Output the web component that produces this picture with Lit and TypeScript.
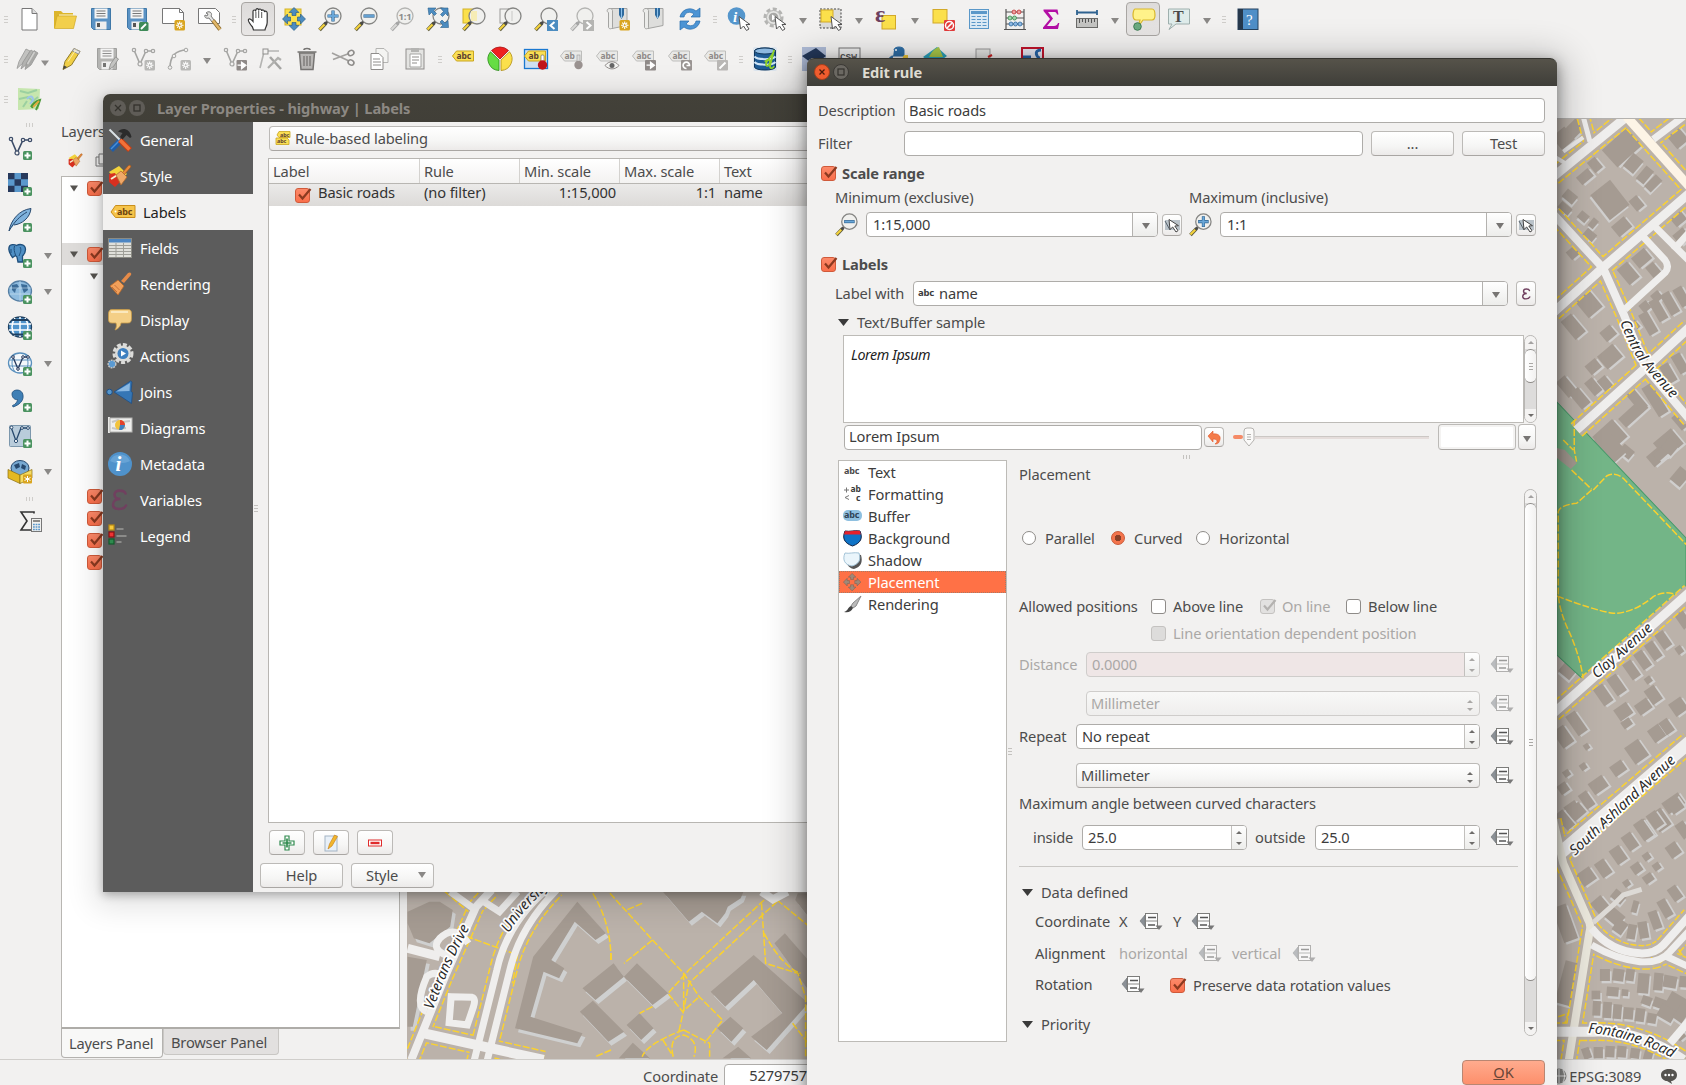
import { LitElement, html, css, svg, nothing } from "lit";
import { customElement } from "lit/decorators.js";
import { classMap } from "lit/directives/class-map.js";

/* ---------- icon parts ---------- */
const plus = svg`<rect x="15" y="15" width="9" height="9" rx="1.5" fill="#4b9360"/><path d="M19.500 16.500v6M16.500 19.500h6" stroke="#fff" stroke-width="2"/>`;
const gold = svg`<rect x="13.500" y="13" width="10.500" height="10.500" rx="1.500" fill="#d9a520"/><path d="M18.700 14.500v7.500M15 18.200h7.500M16.200 15.700l5 5M21.200 15.700l-5 5" stroke="#fff" stroke-width="1.100"/><circle cx="18.700" cy="18.200" r="1.500" fill="#d9a520" stroke="#fff"/>`;
const star = svg`<rect x="13.500" y="13" width="10.500" height="10.500" rx="1.500" fill="#b9b9b7"/><path d="M18.700 14.500v7.500M15 18.200h7.500M16.200 15.700l5 5M21.200 15.700l-5 5" stroke="#fff" stroke-width="1.100"/><circle cx="18.700" cy="18.200" r="1.500" fill="#b9b9b7" stroke="#fff"/>`;
const cursor = svg`<path d="M12 9.500l1.500 12.500 3-3 3 4.500 2.500-1.500-3-4.500h4z" fill="#fff" stroke="#555"/>`;
const mag = (inner: unknown, grey = false) => svg`
  <path d="M1.500 23L8 16" stroke="${grey ? "#a5a5a5" : "#5d5a3c"}" stroke-width="3.600"/>
  <path d="M1.500 22.500L6.500 17.500" stroke="${grey ? "#d8d8d6" : "#f5d33c"}" stroke-width="2.200"/>
  <path d="M7 17l3-3" stroke="${grey ? "#a5a5a5" : "#4a4a4a"}" stroke-width="2.600"/>
  <circle cx="15" cy="9" r="8" fill="#f0f0ee" stroke="${grey ? "#b4b4b2" : "#858583"}" stroke-width="1.300"/>${inner}`;
const tag = (fill: string, line: string, ink: string, t = "abc") => svug(fill, line, ink, t);
const svug = (fill: string, line: string, ink: string, t: string) => svg`
  <path d="M.5 9l4-5h17v10h-17z" fill="${fill}" stroke="${line}"/>
  <text x="4.500" y="12" font-size="8.500" font-weight="700" fill="${ink}" font-family="Noto Sans, sans-serif">${t}</text>`;
const gtag = (t = "abc") => tag("#e9e9e7", "#bdbdbb", "#8f8a88", t);
const floppy = (b: string, l: string) => svg`
  <path d="M2.500 1.500h19v21h-17l-2-2z" fill="${b}" stroke="${l}"/>
  <rect x="5.500" y="1.500" width="13" height="10" fill="#f4f4f4"/><path d="M7.500 4h9M7.500 6.500h9M7.500 9h9" stroke="#777"/>
  <rect x="6.500" y="14.500" width="11" height="8" fill="#eee"/><rect x="8" y="16" width="3" height="4" fill="#555"/>`;
const vee = (c: string) => svg`<path d="M3 3l6 14L15 4h7" fill="none" stroke="${c}" stroke-width="1.600"/>
  <g fill="#f2f1f0" stroke="${c}" stroke-width="1.200"><circle cx="3" cy="3" r="1.700"/><circle cx="9" cy="17" r="2"/><circle cx="15" cy="4" r="1.700"/><circle cx="22" cy="4" r="1.700"/></g>`;
const globe = (a: string, l: string) => svg`<ellipse cx="12" cy="11" rx="11.500" ry="10" fill="${a}" stroke="${l}" stroke-width="1.300"/>`;
const roll = (c: string) => svg`<path d="M4 1.500h17v17l-15 3z" fill="#dededc" stroke="#a4a4a2"/><path d="M4 1.500c-4 0-3 4-1.500 4V20c0 2 3 2.500 4 .5V3.500C6 2 5 1.500 4 1.500z" fill="#ececea" stroke="#a4a4a2"/><path d="M13 1h5v7l-2.500 4L13 8z" fill="#2e6a9e"/><path d="M15.500 1v10" stroke="${c}"/>`;
const arrow4 = (c: string, s: string) => svg`<g fill="${c}" stroke="${s}" stroke-width=".6"><path d="M12 .5l5 5h-3v3h-4v-3H7zM12 23.500l5-5h-3v-3h-4v3H7zM.5 12l5-5v3h3v4h-3v3zM23.500 12l-5-5v3h-3v4h3v3z"/></g>`;

const ICONS: Record<string, unknown> = {
  new: svg`<path d="M5 1.500h10l5 5v16.500H5z" fill="#fff" stroke="#777"/><path d="M15 1.500v5h5" fill="#ddd" stroke="#777"/>`,
  open: svg`<path d="M1 4h7l2 2h10v3h3l-3 12H1z" fill="#dcb52c"/><path d="M4 9h19.500l-3 12.500H1.500z" fill="#f2cf4c" stroke="#d0a824" stroke-width=".7"/><path d="M6 8h14" stroke="#fff6cf"/>`,
  save: floppy("#5a92c4", "#3f78a8"),
  saveas: svg`${floppy("#5a92c4", "#3f78a8")}<rect x="14" y="15" width="9.500" height="9" rx="1.500" fill="#3e8a57"/><path d="M16 22l5-5" stroke="#fff" stroke-width="1.800"/>`,
  composer: svg`<path d="M1.500 1.500h17l4 4v11h-21z" fill="#fff" stroke="#777"/><path d="M18.500 1.500v4h4" fill="none" stroke="#777"/>${gold}`,
  composers: svg`<path d="M1.500 1.500h17l4 4v11h-21z" fill="#fff" stroke="#777"/><path d="M9 6c3-3 7 0 5 3l3 4-2 2-3-4c-3 1-5-1-4-3l2 1 1-2z" fill="#e4e4e2" stroke="#777"/><path d="M16 13.500l7 9" stroke="#8a6a2c" stroke-width="4"/><path d="M16 13.500l7 9" stroke="#e3b869" stroke-width="2.400"/>`,
  hand: svg`<path d="M7.500 23l-1-3C4 17 1.500 14 2.500 12.500s3 0 4.500 2V4.500c0-2 2.500-2 2.700 0C9.500 1 12.300.8 12.700 3.500c0-2.200 2.800-2 3 .5.300-1.500 2.800-1.500 2.800 1 .8-1.500 2.700-.8 2.700 1.200v9c0 4-2 5-2.200 7.800z" fill="#fff" stroke="#333" stroke-width="1.200"/><path d="M9.900 5v6M12.700 4v7M15.700 5v6" stroke="#444" stroke-width=".9"/>`,
  pansel: svg`<rect x="3" y="2" width="16" height="16" fill="#fbe04b" stroke="#d2b229"/>${arrow4("#4c8cc0", "#1f547f")}`,
  zin: mag(svg`<path d="M15 3.500v11M9.500 9h11" stroke="#2f6390" stroke-width="3.200"/><path d="M15 4v10M10 9h10" stroke="#6aa7d8" stroke-width="2"/>`),
  zout: mag(svg`<path d="M9.500 9h11" stroke="#2f6390" stroke-width="3.200"/><path d="M10 9h10" stroke="#6aa7d8" stroke-width="1.800"/>`),
  z11: mag(svg`<text x="8.500" y="12.500" font-size="9.500" font-weight="700" fill="#8d8d8b" font-family="Noto Sans, sans-serif">1:1</text>`, true),
  zfull: svg`${mag(nothing)}<g fill="#4c8cc0" stroke="#2a618f" stroke-width=".6"><path d="M2 1h8L7.500 3.500l3 3-2 2-3-3L3 8zM22 1v8l-2.500-2.500-3 3-2-2 3-3L14.500 1zM22.500 20.500h-8L17 18l-3-3 2-2 3 3 3-2.500z"/></g>`,
  zsel: svg`<rect x="1" y="2" width="14" height="14" fill="#fbe04b" stroke="#d2b229"/>${mag(svg`<rect x="9" y="4" width="6" height="10" fill="#f6ecb5"/>`)}`,
  zlay: svg`<rect x="2" y="2" width="14" height="14" fill="#f2f2f0" stroke="#9a9a98"/>${mag(svg`<path d="M14 4v10" stroke="#c8c8c6"/>`)}`,
  zlast: svg`${mag(nothing)}<rect x="13" y="13" width="11" height="11" fill="#4c8cc0"/><path d="M20.500 15l-4 3.500 4 3.500" fill="none" stroke="#fff" stroke-width="2"/>`,
  znext: svg`${mag(nothing, true)}<rect x="13" y="13" width="11" height="11" fill="#b5b5b3"/><path d="M16.500 15l4 3.500-4 3.500" fill="none" stroke="#fff" stroke-width="2"/>`,
  bmnew: svg`${roll("#8cc0ea")}${gold}`,
  bm: roll("#8cc0ea"),
  refresh: svg`<path d="M2 10C3 3 12-1 18 4l4-3v9h-9l3-3C12 4 7 5 6 10z" fill="#4c94d4" stroke="#2a6fae" stroke-width=".7"/><path d="M22 14c-1 7-10 11-16 6l-4 3v-9h9l-3 3c4 3 9 2 10-3z" fill="#4c94d4" stroke="#2a6fae" stroke-width=".7"/>`,
  identify: svg`<circle cx="9.500" cy="9" r="8.800" fill="#5596cc"/><text x="6" y="14.500" font-size="15" font-style="italic" font-weight="700" fill="#fff" font-family="Liberation Serif, serif">i</text>${cursor}`,
  run: svg`<circle cx="10.500" cy="10.500" r="8.500" fill="none" stroke="#b4b4b2" stroke-width="3" stroke-dasharray="4 2.500"/><circle cx="10.500" cy="10.500" r="7" fill="#e6e6e4" stroke="#b4b4b2"/><circle cx="10.500" cy="10.500" r="4.800" fill="#a8a8a6"/><path d="M9 7.500l5 3-5 3z" fill="#fff"/>${cursor}`,
  select: svg`<rect x="1" y="2" width="21" height="19" fill="#dcdcda" stroke="#444" stroke-dasharray="2 1.500"/><rect x="2" y="3" width="12" height="12" fill="#fbe04b" stroke="#d2a929"/>${cursor}`,
  seleps: svg`<rect x="7" y="8.500" width="13.500" height="13.500" fill="#fbe04b" stroke="#d2a929"/><text x="0" y="15" font-size="24" font-weight="700" fill="#6d4160" font-family="Liberation Serif, serif">ε</text>`,
  desel: svg`<rect x="2" y="2.500" width="14" height="13.500" fill="#fbe04b" stroke="#d2a929"/><rect x="13" y="13" width="11" height="11" rx="1" fill="#e33b3b"/><circle cx="18.500" cy="18.500" r="4" fill="none" stroke="#fff" stroke-width="1.500"/><path d="M15.800 21.300l5.400-5.400" stroke="#fff" stroke-width="1.500"/>`,
  table: svg`<rect x="2.500" y="2.500" width="19" height="19" fill="#dbeaf5" stroke="#5a98c9"/><path d="M4 5.500h16" stroke="#5a98c9" stroke-width="3"/><path d="M4.500 9.500h15M4.500 12.500h15M4.500 15.500h15M4.500 18.500h15" stroke="#5a98c9" stroke-dasharray="4 1.500"/>`,
  abacus: svg`<path d="M3 2v20M21 2v20M1 22.500h22M3 5h18M3 11h18M3 17h18" fill="none" stroke="#555" stroke-width="1.200"/><g stroke-width=".8"><g fill="#f0a0a0" stroke="#b33"><circle cx="11" cy="5" r="2"/><circle cx="16" cy="5" r="2"/></g><g fill="#9fd6ab" stroke="#3a8a4e"><circle cx="7" cy="11" r="2"/><circle cx="11.500" cy="11" r="2"/></g><g fill="#8fbbe6" stroke="#2e6a9e"><circle cx="8" cy="17" r="2"/><circle cx="12.500" cy="17" r="2"/><circle cx="17" cy="17" r="2"/></g></g>`,
  sigma: svg`<path d="M4.500 2.500h14l1 5h-1.500c-.5-2-1.500-2.500-3-2.500H9l5 6.500-6 7.500h7c2 0 3-.8 4-3h1.300l-1.300 6H4v-1.500l7-8.500-6.500-8z" fill="#b30fa5"/>`,
  ruler: svg`<path d="M2 5.500h20M2 3v5M22 3v5" stroke="#2f6390" stroke-width="1.800"/><rect x="1.500" y="11.500" width="21" height="9" fill="#c4c4c2" stroke="#6b6b69"/><path d="M4.500 12v4M7.500 12v3M10.500 12v4M13.500 12v3M16.500 12v4M19.500 12v3" stroke="#555"/>`,
  tips: svg`<path d="M4 2h17c2 0 3 2 3 6s-1 5-3 5h-9l-5 7 2-7H5c-2 0-3-2-3-5s1-6 2-6z" fill="#fff28a" stroke="#d9b72b" stroke-width="1.200"/><circle cx="6.500" cy="19.500" r="3.800" fill="#6cab80" stroke="#3f7d54"/>`,
  textann: svg`<path d="M1.500 2h21v15H9l-7 5.500 3-5.500H1.500z" fill="#dfeceb" stroke="#9fb0ae"/><text x="6" y="15" font-size="16" font-weight="700" fill="#4a4a4a" font-family="Liberation Serif, serif">T</text>`,
  help: svg`<rect x="2" y="2" width="20" height="20.500" fill="#4f8fc8" stroke="#26435f"/><rect x="2" y="2" width="5" height="20.500" fill="#26384c"/><text x="10" y="17.500" font-size="15" fill="#fff" font-family="Liberation Serif, serif">?</text>`,
  pencils: svg`<g stroke="#979795" stroke-width=".8"><path d="M6 21.500l2-7L15 2l4 2-7 12z" fill="#c2c2c0"/><path d="M10 22l2-7 8-12 3 2-7 12z" fill="#b2b2b0"/><path d="M14 22.500l1.500-6.500L23 3.500l4 2.500-7 12z" fill="#a8a8a6"/><path d="M16.500 17l7-12" stroke="#cfcfcd" stroke-width="1.500"/></g><path d="M30 13.500h8l-4 5.500z" fill="#8f8d8b"/>`,
  pencil: svg`<path d="M4 22.500l2-8L15 1.500l6 3-8.500 13.500z" fill="#f1cf45" stroke="#8f7a2a"/><path d="M4 22.500l1-4 3 1.500z" fill="#444"/><path d="M15 1.500l6 3-1.500 2.500-6-3z" fill="#e4e4e2" stroke="#999"/><path d="M9 14.500l8-12" stroke="#fbeeb0"/>`,
  gsave: svg`<g opacity=".8">${floppy("#a5a5a3", "#8b8b89")}</g><path d="M14 22.500l1.500-5.500 5-7 3 2-5 7.500z" fill="#c4c4c2" stroke="#8b8b89" stroke-width=".8"/>`,
  gvee: svg`${vee("#a5a5a3")}${star}`,
  gcurve: svg`<path d="M3 21C3 10 8 3 20 3" fill="none" stroke="#a5a5a3" stroke-width="1.600"/><g fill="#f2f1f0" stroke="#a5a5a3"><circle cx="3" cy="20.500" r="1.800"/><circle cx="7" cy="9" r="1.800"/><circle cx="19" cy="3" r="1.800"/></g>${star}`,
  gmove: svg`${vee("#a5a5a3")}<rect x="13.500" y="13" width="10.500" height="10.500" rx="1" fill="#8f8a88"/><path d="M14.500 18.200h4v-3l4.500 3-4.500 3.500v-3" fill="#fff" stroke="#fff" stroke-width="1.200"/>`,
  gnode: svg`<path d="M8 4h12M5 5L1 21" stroke="#b4b4b2" stroke-width="1.600"/><rect x="4" y="2" width="5" height="5" fill="#f2f1f0" stroke="#8f8f8d"/><path d="M11 10l11 12" stroke="#a5a5a3" stroke-width="2.500"/><path d="M9 21L19 11l3 2" fill="none" stroke="#b0b0ae" stroke-width="2.200"/>`,
  trash: svg`<path d="M4.500 6h15l-1.500 16.500H6z" fill="#b9b7b5" stroke="#777573" stroke-width="1.500"/><path d="M2.500 5h19M9 3c0-2 6-2 6 0" fill="none" stroke="#777573" stroke-width="1.700"/><path d="M9 9v10M12 9v10M15 9v10" stroke="#777573" stroke-width="1.300"/>`,
  cut: svg`<path d="M1 6l17 8M2 12.500l16-6" stroke="#a3a19f" stroke-width="1.700"/><g fill="none" stroke="#8f8d8b" stroke-width="1.600"><ellipse cx="20" cy="6" rx="3" ry="2.500" transform="rotate(-30 20 6)"/><ellipse cx="20" cy="15.500" rx="3" ry="2.500" transform="rotate(30 20 15.500)"/></g>`,
  copy: svg`<path d="M9 1.500h8l4 4v10H9z" fill="#f4f4f2" stroke="#b4b4b2"/><path d="M4 6.500h8l4 4v12H4z" fill="#fff" stroke="#8f8d8b"/><path d="M6 12h7M6 15h8M6 18h8" stroke="#8f8d8b"/>`,
  paste: svg`<rect x="3" y="2" width="18" height="20" fill="#e4e4e2" stroke="#8f8d8b"/><rect x="8" y="1" width="8" height="4" fill="#b4b4b2"/><path d="M7 7h11v13H7z" fill="#fff" stroke="#a5a5a3"/><path d="M9 10h7M9 13h7M9 16h5" stroke="#8f8d8b"/>`,
  tagY: tag("#fadf55", "#c9a51e", "#5c4030"),
  pie: svg`<g stroke-width=".8"><path d="M12 12L3.500 3.500A12 12 0 0 1 20.500 3.500z" fill="#ee2020" stroke="#a11"/><path d="M11 13L2.500 4.800A11.500 11.500 0 0 0 11 23.500z" fill="#66dd44" stroke="#2c8a1a"/><path d="M13 13l8.500-8.200A11.500 11.500 0 0 1 13 23.500z" fill="#fbe04b" stroke="#b08d12"/></g>`,
  pinned: svg`<rect x=".5" y="2.500" width="23" height="19" fill="#cfe0f1" stroke="#1a78d0" stroke-width="1.300"/>${tag("#fadf55", "#c9a51e", "#5c4030", "ab")}<rect x="17" y="8" width="3" height="9" rx="1" fill="#fff" stroke="#555" stroke-width=".6"/><circle cx="18.500" cy="18" r="4.700" fill="#c0141c"/>`,
  gpin: svg`${gtag("ab")}<rect x="17" y="8" width="3" height="9" fill="#ddd" stroke="#999" stroke-width=".6"/><circle cx="18.500" cy="18" r="4.200" fill="#9a9290"/>`,
  geye: svg`${gtag()}<path d="M9 18.500c4-5 10-5 14 0-4 4.500-10 4.500-14 0z" fill="#f4f4f2" stroke="#8f8a88"/><circle cx="16" cy="18.500" r="2.500" fill="#666"/>`,
  gtmove: svg`${gtag()}<rect x="13" y="13" width="11" height="10.500" rx="1" fill="#8f8a88"/><path d="M14.500 18.200h4v-3l4 3-4 3v-3" fill="#fff" stroke="#fff" stroke-width="1.200"/>`,
  gtrot: svg`${gtag()}<rect x="13" y="13" width="11" height="10.500" rx="1" fill="#9a9593"/><path d="M18.500 21.500a3.200 3.200 0 1 1 3-3h-3" fill="none" stroke="#fff" stroke-width="1.700"/>`,
  gtedit: svg`${gtag()}<rect x="13" y="13" width="11" height="10.500" rx="1" fill="#b9b7b5"/><path d="M15.500 21.500l6-6" stroke="#fff" stroke-width="2"/>`,
  db: svg`<rect x="0" y="0" width="24" height="24" rx="2" fill="#cfe0ee" opacity=".6"/><path d="M1.500 4c0-4 21-4 21 0v16c0 4-21 4-21 0z" fill="#1f5c96" stroke="#12375c"/><ellipse cx="12" cy="4" rx="10.500" ry="3" fill="#8db9e0" stroke="#12375c"/><path d="M1.500 9.500c3 3.500 18 3.500 21 0M1.500 15c3 3.500 18 3.500 21 0" fill="none" stroke="#cfe4f6" stroke-width="2"/><path d="M12 15c2-3 5-3 5 0s-4 6-4 2 8-9 8-14l-4 16c0 3 3 3 4 0" fill="none" stroke="#8fd12c" stroke-width="1.800"/>`,
  cubeD: svg`<rect x="0" y="0" width="24" height="24" fill="#aebbd6"/><path d="M0 9L14 1l10 8-12 9z" fill="#24385a"/>`,
  csw: svg`<rect x="1" y="1" width="21" height="20" fill="#eee" stroke="#777"/><text x="2" y="13" font-size="9.500" font-weight="700" fill="#555" font-family="Liberation Mono, monospace">CSW</text>`,
  python: svg`<path d="M7 3c0-4 10-4 10 0v6H6c-4 0-5 5-4 8h3" fill="#2f6ea6" stroke="#2f6ea6"/><path d="M17 8h4v8H10v6" fill="#f2c93c"/><circle cx="9" cy="3" r="1" fill="#fff"/>`,
  cubeG: svg`<path d="M0 10L14 0l10 9-12 9z" fill="#2ba3bd"/><path d="M6 10C9 4 12 1 16 0l4 10z" fill="#a9c94a"/>`,
  sheet: svg`<rect x="4" y="2" width="14" height="16" fill="#e4e4e2" stroke="#999"/><path d="M16 10l4-2" stroke="#c22" stroke-width="2"/>`,
  redbox: svg`<rect x="1" y="1" width="21" height="21" fill="#e8e8f2" stroke="#c0142c" stroke-width="2"/><path d="M2 10h8M20 3c-8 0-4 8-1 8" fill="none" stroke="#2764a8" stroke-width="3"/>`,
  osm: svg`<path d="M1 1l22 1-1 20-21 1z" fill="#c6e6ae"/><path d="M3 4l8 2 9-3M2 12l9-2 5 4 5-4M6 20l4-6" fill="none" stroke="#9bd0a0" stroke-width="2"/><path d="M10 12c3-4 6-3 6 1l-3 4" fill="none" stroke="#9cc4ea" stroke-width="2"/><path d="M14 20c2-4 6-6 9-7-1 4-2 6-4 10M15 21l2-5" fill="none" stroke="#4c9a3a" stroke-width="2"/><path d="M16 20l6-6" stroke="#e1a93c" stroke-width="1.800"/>`,
  lvee: svg`${vee("#3c4c68")}${plus}`,
  lraster: svg`<rect x="0" y="1" width="20" height="19" fill="#5a98cc"/><path d="M0 1h6.500v6.300H0zM13 1h7v6.300h-7zM6.500 7.300H13v6.400H6.500zM0 13.700h6.500V20H0zM13 13.700h7V20h-7z" fill="#27395c"/>${plus}`,
  feather: svg`<path d="M1 23C3 12 11 2 23 .5 22 10 14 16 6 17" fill="#7fb2dc" stroke="#27496e"/><path d="M1 23C6 14 12 8 19 4" fill="none" stroke="#27496e"/>${plus}`,
  pg: svg`<path d="M1 4C1-.5 7 .5 8.500 1.500 12-.5 17.500.5 17.500 5.500c0 3-1.500 5-3 6.500v6h-4.500l-1-5-1.500-1.500-3 2C3 11 0 8 1 4z" fill="#4f8fc4" stroke="#1f4f7c" stroke-width="1.300"/><path d="M6.500 2c-1 3 0 6 1 9M12 3c2 3 0 6-1 9M3 5v4" fill="none" stroke="#1f4f7c"/>${plus}`,
  wms: svg`${globe("#8fbcdf", "#557fa4")}<path d="M4 5l5-1 2 3-3 2-1 4-3-3zM13 4l6 1 1 5-4 3-2-5z" fill="#3b6c98"/><path d="M1.500 8h21M1.500 14h21M12 1v20" stroke="#cfe2f2" stroke-width=".6"/>${plus}`,
  wcs: svg`${globe("#4f94cc", "#1f4060")}<path d="M1 8h22M1 14h22M12 1v20M7 2c-4 6-4 12 0 18M17 2c4 6 4 12 0 18" fill="none" stroke="#fff" stroke-width="1.500"/><path d="M4 4h16M4 18.500h16" stroke="#1f4060" stroke-width="2"/>${plus}`,
  wfs: svg`${globe("#f4f8fb", "#5a90bd")}<path d="M1 8h22M1 14h22M7 2c-4 6-4 12 0 18M17 2c4 6 4 12 0 18" fill="none" stroke="#5a90bd"/><path d="M5 5l5 12L15 5h5" fill="none" stroke="#27395c" stroke-width="1.300"/><g fill="#fff" stroke="#27395c"><circle cx="5" cy="5" r="1.300"/><circle cx="10" cy="17" r="1.300"/><circle cx="15" cy="5" r="1.300"/><circle cx="20" cy="5" r="1.300"/></g>${plus}`,
  comma: svg`<path d="M4 6c0-5 10-6 11 1 1 6-4 10-10 12l-.5-1.500c3-1 5-4 5-6C6 12 4 9 4 6z" fill="#3f7fb5" stroke="#1f4f7c" stroke-width=".8"/>${plus}`,
  vlay: svg`<rect x="1.500" y="1.500" width="21" height="21" rx="1" fill="#b9ccdb" stroke="#7c97ac"/><path d="M3 3l5 14 5-13h8" fill="none" stroke="#27496e" stroke-width="1.300"/><g fill="#fff" stroke="#27496e"><circle cx="3.500" cy="3.500" r="1.400"/><circle cx="8" cy="17" r="1.600"/><circle cx="14" cy="4" r="1.400"/><circle cx="20" cy="4" r="1.400"/></g>${plus}`,
  gpkg: svg`<ellipse cx="12" cy="8" rx="9" ry="7.500" fill="#78a9d2" stroke="#27496e"/><path d="M6 5l5-2 1 4-4 2zM14 4l4 2-1 4-4-2z" fill="#27496e"/><path d="M0 9.500l12 5.500v8.500L0 18z" fill="#e3b923" stroke="#8a6d10" stroke-width=".7"/><path d="M24 9.500L12 15v8.500L24 18z" fill="#f6dc62" stroke="#8a6d10" stroke-width=".7"/><rect x="15" y="14.500" width="9" height="9" rx="1" fill="#d9a520"/><path d="M19.500 16v6M16.500 17.500l6 3M22.500 17.500l-6 3" stroke="#fff"/>`,
  sumcalc: svg`<path d="M16 3.500V2H3l6 9-6 9h10" fill="none" stroke="#333" stroke-width="1.600"/><rect x="13.500" y="8.500" width="10" height="13" fill="#f0f0ee" stroke="#777"/><path d="M15 11h7" stroke="#8b8b89" stroke-width="2"/><path d="M15 14.500h7M15 17h7M15 19.500h7" stroke="#5a98cc" stroke-width="1.400" stroke-dasharray="1.800 .8"/>`,
  tools: svg`<path d="M3 22l10-10" stroke="#1f5da8" stroke-width="5.500"/><path d="M3 21l9-9" stroke="#4a8fd6" stroke-width="1.500"/><path d="M1.500 1.500l10 10" stroke="#dbe2e6" stroke-width="2"/><path d="M12 12l10 10" stroke="#c63d12" stroke-width="5.500"/><path d="M12 12l9.500 9.500" stroke="#f2723a" stroke-width="3.500"/><path d="M10 3.500c4-4.500 12-3 13.500 5.500l-1.500 1-3.500-3-4 4.500-2.500-2.500 2.500-4z" fill="#2b2b2b"/>`,
  style: svg`<path d="M1 8l10-6 8 8-9 8z" fill="#f3d33c"/><path d="M1 10l6-1 5 9-5 5-6-5z" fill="#d83020"/><path d="M3 15l8-5" stroke="#f7f0d0" stroke-width="2"/><path d="M14 9l6-7c2-2 4 0 2 2l-6 7z" fill="#e88a3c" stroke="#a55818" stroke-width=".7"/><path d="M8 11l5-4 6 6-6 8z" fill="#f0a868" stroke="#b06a2c" stroke-width=".8"/>`,
  taglab: svg`<path d="M0 12l4.500-6.500H24v12H4.500z" fill="#f6c44a" stroke="#c98e1c"/><circle cx="4.500" cy="11.500" r="1" fill="#fff"/><text x="6" y="14.800" font-size="9" font-weight="700" fill="#6c4312" font-family="Noto Sans, sans-serif">abc</text>`,
  fields: svg`<rect x=".5" y="2.500" width="23" height="19" fill="#e0e0da" stroke="#8b8b84"/><rect x="1" y="3" width="22" height="3.500" fill="#4d86c2"/><path d="M1 9.500h22M1 12.500h22M1 15.500h22M1 18.500h22M8 7v14M15.500 7v14" stroke="#9f9f98"/>`,
  brush: svg`<path d="M13 9l7-8c2-1.500 4 0 3 2l-7 8z" fill="#e58a48"/><path d="M2 14l8-6 6 6-6 9z" fill="#f2a05a" stroke="#b8682a" stroke-width=".8"/><path d="M4 15l5 5M6.500 13l5 5" stroke="#c9733a"/>`,
  bubble: svg`<path d="M4 1.500h16c2.500 0 3.500 1.500 3.500 4v5c0 3-1 4.500-3.500 4.500h-7c0 3-3 6-6 7 1-2 2-4 1-7H4c-2.500 0-3.500-1-3.500-4v-5c0-2.500 1-4.500 3.500-4.500z" fill="#f4cf86" stroke="#c89a48" stroke-width=".8"/><path d="M3 4h17" stroke="#fdf0cf" stroke-width="1.500"/>`,
  gears: svg`<circle cx="15" cy="9.500" r="9" fill="none" stroke="#dcdcda" stroke-width="3" stroke-dasharray="4 2"/><circle cx="15" cy="9.500" r="8" fill="#dcdcda"/><circle cx="15" cy="9.500" r="5.500" fill="#3f80c0"/><path d="M13 6.500l5 3-5 3z" fill="#fff"/><circle cx="4" cy="20" r="3.800" fill="#5a9ad2" stroke="#c4c4c2" stroke-width="1.500" stroke-dasharray="1.800 .9"/>`,
  joins: svg`<path d="M6 12L22.500 1l1.500 1-1 9.500 1.500 1-1 11z" fill="#3576b5" stroke="#1f4f85" stroke-width=".8"/><path d="M8 11.500L22 3l-.5 8z" fill="#8ab8e2"/><circle cx="1.500" cy="12" r="2.800" fill="#5596cc" stroke="#1f4f85"/>`,
  diagrams: svg`<rect x="0" y="1" width="2" height="16" fill="#e8e8e6"/><rect x="2" y="2" width="22" height="14" fill="#eeeeec" stroke="#b4b4b2"/><path d="M4 6l6-2 4 2 8-1M4 12l5 1 9-1" stroke="#c6c6c4" stroke-width="2" fill="none"/><circle cx="12" cy="9" r="5" fill="#f2c33c"/><path d="M12 9V4a5 5 0 0 1 5 5z" fill="#e2412c"/><path d="M12 9h5a5 5 0 0 1-6 5z" fill="#3f80c0"/>`,
  info: svg`<circle cx="12" cy="12" r="12" fill="#4f92cb"/><path d="M2 9a11 11 0 0 1 20 0c-6 3-14 3-20 0z" fill="#7fb4e0" opacity=".5"/><text x="7.500" y="19" font-size="21" font-style="italic" font-weight="700" fill="#fff" font-family="Liberation Serif, serif">i</text>`,
  eps: svg`<path d="M17.500 5.500C16.500 2 6.500 1 6.500 6.500c0 3.500 3 4.500 6 4.500-4 0-7.500 1.500-7.500 5.500 0 6 11 5.500 13 1" fill="none" stroke="#70405f" stroke-width="2.600" stroke-linecap="round"/>`,
  legend: svg`<g stroke-width="1.200"><rect x="1" y="1" width="5" height="5" fill="#f6c93c" stroke="#b98a12"/><rect x="1" y="8" width="5" height="5" fill="#e33" stroke="#8a1010"/><rect x="1" y="15" width="5" height="5" fill="#2f8a4e" stroke="#125a2a"/></g><path d="M8.500 5h7M8.500 12h10M8.500 18h5" stroke="#8b8b89" stroke-width="1.800"/>`,
  rules: svg`<path d="M4 1.500h11v6H4L2 5z" fill="#fadf55" stroke="#c9a51e" stroke-width=".8"/><path d="M1 8h11l2 2v4.500H1z" fill="#fadf55" stroke="#c9a51e" stroke-width=".8"/><g font-size="5.500" font-weight="700" fill="#5c4030" font-family="Noto Sans, sans-serif"><text x="5" y="6.500">abc</text><text x="2" y="13.300">abc</text></g>`,
  dd: svg`<path d="M0 8l5-6v12z" fill="#8b9096" stroke="#6f7377" stroke-width=".6"/><rect x="5.500" y=".5" width="12" height="15" fill="#fdfdfd" stroke="#7c7c7a"/><path d="M5.500 8h12" stroke="#8b8b89"/><path d="M8 4.500h8M8 12h7" stroke="#555" stroke-width="1.500"/><path d="M15.500 12.500h7l-3.500 4.500z" fill="#777"/>`,
  pick: svg`<rect x="1" y="3" width="15" height="10" fill="#b9c2c9"/><path d="M1 4l5 9" stroke="#55606a"/><path d="M5 2.500l1 10 2.700-2.500 3.300 5 2-1.300-3.200-4.700 3.700-.3z" fill="#fff" stroke="#444"/>`,
  undo: svg`<path d="M1 6l5-5v3c6-1 9 3 6 8-.5 1.500-2 2-4 2 3-2 3-5-2-5v3z" fill="#f47b4a" stroke="#e0582a" stroke-width=".6"/>`,
  lt: svg`<text x="1" y="10.500" font-size="9" font-weight="700" fill="#4a4a4a" font-family="Noto Sans, sans-serif">abc</text>`,
  lf: svg`<g font-weight="700" fill="#3a3a3a" font-size="8.500" font-family="Noto Sans, sans-serif"><text x="7.500" y="7">ab</text><text x="13" y="15.500">c</text></g><path d="M1 5h5M3.500 2.500v5M6 10.500l-4 2 4 2" fill="none" stroke="#777"/>`,
  lb: svg`<rect x="0" y="3" width="19" height="11" rx="5" fill="#8fc0e0"/><text x="1" y="11" font-size="9" font-weight="700" fill="#2f4456" font-family="Noto Sans, sans-serif">abc</text>`,
  lbg: svg`<path d="M2 2c5 1 9-1 15 0 3 7 1 12-7.500 15C1 14-1 9 2 2z" fill="#0f73c6" stroke="#124"/><path d="M2 2c5 1 9-1 15 0l.7 3.500H1z" fill="#e6202a"/>`,
  lsh: svg`<path d="M4 4c5 1 9-1 14 0 2 7 0 12-7 14-6-1-9-6-7-14z" fill="#555"/><path d="M2 2c4 1 9-1 14 0 2 7 0 11-7 13C2 14-1 9 2 2z" fill="#eaf5fb" stroke="#a4c4d8"/>`,
  lpl: svg`<g transform="scale(.76)">${arrow4("#a08878", "#6d5c52")}</g>`,
  lre: svg`<path d="M18 1L10 8l-2 3 2 2 3-2z" fill="#bbb" stroke="#888"/><path d="M8 11l2 2c-2 4-5 5-9 4 4-1 4-5 7-6z" fill="#444"/>`,
  add: svg`<path d="M6 1h4v5h5v4h-5v5H6v-5H1V6h5z" fill="#fff" stroke="#2f8a4e" stroke-width="1.200"/><path d="M8 3.500v9M3.500 8h9" stroke="#2f8a4e" stroke-width="1.700"/>`,
  edit: svg`<rect x="2" y="1" width="12" height="15" fill="#e8f0f8" stroke="#a4b4c4"/><path d="M5 14l1.500-5 5-9 3 1.500-5.500 9.500z" fill="#f2b62c" stroke="#c27a12" stroke-width=".6"/>`,
  rem: svg`<rect x="1.500" y="5" width="13" height="6" fill="#fff" stroke="#e02c2c"/><path d="M3.500 8h9" stroke="#e02c2c" stroke-width="2.400"/>`,
  srs: svg`<circle cx="8" cy="8" r="7.500" fill="#8b8b89"/><path d="M1 8h14M8 1v14M4 2c-2 4-2 8 0 12M12 2c2 4 2 8 0 12" stroke="#f2f1f0" fill="none"/>`,
  msg: svg`<path d="M8 1c5 0 8 2.500 8 6s-3 6-6 6l1 3-5-3C3 13 0 10.500 0 7s3-6 8-6z" fill="#55534f"/><g fill="#fff"><circle cx="4.500" cy="7" r="1.200"/><circle cx="8" cy="7" r="1.200"/><circle cx="11.500" cy="7" r="1.200"/></g>`,
  layers: svg`<path d="M4 4V1h10v3M4 4H1v9h10v-3M4 4v7h10" fill="none" stroke="#777"/>`,
};
const icon = (n: string, w = 24, h = w, vb = `0 0 ${w} ${h}`) =>
  html`<svg class="ic" width=${w} height=${h} viewBox=${vb}>${ICONS[n]}</svg>`;
const tri = (w = 8, h = 6, c = "#8a8886") =>
  html`<svg class="ic" width=${w} height=${h} viewBox="0 0 8 6"><path d="M0 0h8L4 6z" fill=${c} /></svg>`;
const check = (state = "on") => html`<span class="cb ${state}">${
  state === "on" || state === "dim"
    ? html`<svg width="17" height="16" viewBox="0 0 17 16"><path d="M4 7.500l3.500 4L15.500 2" fill="none" stroke=${state === "on" ? "#8c3a20" : "#b4b2b0"} stroke-width="2.200"/></svg>`
    : nothing
}</span>`;
const spin = html`<span class="spin"><i class="up"></i><i class="dn"></i></span>`;

const base = css`
  * { box-sizing: border-box; }
  :host { font: 14.67px/20px "Noto Sans", "Open Sans", sans-serif; color: #4c4c4c; white-space: nowrap; letter-spacing: -0.12px; }
  .ic { display: block; flex: none; overflow: visible; }
  .cb { display: inline-block; position: relative; width: 15px; height: 15px; border: 1px solid #8e8b88; border-radius: 3px; background: #fff; flex: none; }
  .cb.on { background: linear-gradient(#fc8a6a, #fa6f4b); border-color: #d05a3a; }
  .cb.dim { background: #e2e1e0; border-color: #c4c2c0; }
  .cb.gone { background: #dddcdb; border-color: #c4c2c0; }
  .cb svg { position: absolute; left: -1px; top: -2px; }
  .btn { display: flex; align-items: center; justify-content: center; height: 25px; border: 1px solid #bcbab7; border-bottom-color: #a9a6a3; border-radius: 4px; background: linear-gradient(#fff, #f6f6f5 60%, #eceae9); }
  .field { display: flex; align-items: center; height: 25px; border: 1px solid #aeaca9; border-radius: 4px; background: #fff; padding: 0 0 2px 4px; color: #3c3c3c; overflow: hidden; }
  .title { display: flex; align-items: center; height: 28px; border-radius: 7px 7px 0 0; font-weight: 700; }
  .wbtn { display: flex; align-items: center; justify-content: center; width: 16px; height: 16px; border-radius: 50%; }
  .hgrip { display: flex; gap: 2px; }
  .hgrip i { width: 1px; height: 4px; background: #c4c2bf; }
  .vgrip { display: flex; flex-direction: column; gap: 2px; }
  .vgrip i { width: 4px; height: 1px; background: #c4c2bf; }
`;

/* ---------- map canvas ---------- */
type B = [number, number, number, number, number];
/* each block: centre x, centre y, width, height, rotation, in the units of its tile */
const TILE_A: B[] = [
  [1000,240,60,40,-45],[970,265,50,50,-40],[1150,290,110,70,-42],[1110,450,95,75,52],[1035,380,45,30,-40],[1065,345,30,40,-40],[1180,340,40,50,40],[1215,375,30,50,40],[1240,400,28,50,45],
  [990,440,40,30,40],[975,475,40,24,40],[1030,500,30,26,40],[1060,520,20,30,40],[1050,555,36,26,40],[1010,600,60,30,-40],[1145,530,50,40,-40],[1190,460,30,40,-40],
  [1165,670,40,60,-40],[1205,625,50,40,-40],[1240,660,30,40,-40],[1310,500,40,50,-40],[1325,560,40,40,-40],[1310,260,45,60,-40],
  [1000,830,40,70,-40],[1045,760,55,70,-40],[1105,850,40,36,-40],[1110,920,60,50,-40],[1060,950,40,34,-40],[1180,830,34,28,-40],[1215,770,28,28,-40],[1250,740,28,28,-40],[1225,820,30,70,-30],[1255,780,30,70,-30],[1290,760,30,70,-30],[1325,740,30,60,-30],
  [980,1010,34,60,-40],[1020,1045,34,60,-40],[1060,1010,30,50,-40],[1095,1000,30,40,-40],[1110,1160,80,70,-42],[1180,1090,90,36,-42],[1190,1050,30,70,-40],[1245,1050,34,100,-32],[1285,970,30,60,-30],[1320,940,30,60,-30],[1285,1180,70,60,-40],[1325,1110,40,50,-40],
  [1250,1220,50,40,-40],[1160,1205,40,30,40],
];
const TILE_B: B[] = [
  [980,60,36,50,-40],[1110,20,90,56,48],[1270,35,60,28,-42],[1320,110,40,50,40],[1290,20,40,40,40],[985,690,44,44,40],
  [1090,765,34,60,-35],[1130,735,34,60,-35],[1175,690,30,56,-35],[1208,660,30,56,-35],[1240,632,30,56,-35],[1270,600,30,52,-35],[1330,540,30,50,-35],[1318,630,20,24,-35],
  [1150,815,46,40,-35],[1160,850,30,24,-35],[1210,800,44,36,-35],[1240,765,36,50,-35],[1315,800,44,44,-35],[1280,860,30,44,-35],[1250,880,40,44,-35],[1225,720,20,20,-35],
  [1190,935,50,60,-35],[1135,985,42,36,-35],[1075,1035,50,40,-35],[1040,1080,30,50,-35],[1000,1110,40,46,-35],[980,1000,20,20,-35],[1030,980,20,20,-35],[1040,920,16,18,-35],[970,1045,30,30,-35],
  [1010,850,34,70,-35],[970,890,40,60,-35],[1260,1140,44,60,-35],[1300,1090,60,40,-35],[1215,1170,36,60,-35],[1330,1170,30,50,-35],
];
const TILE_C: B[] = [
  [975,60,30,60,-40],[1010,35,46,40,-40],[1040,230,46,44,-35],[1090,205,34,50,-35],[1135,165,36,50,-35],[1170,125,34,50,-35],[1210,90,34,60,-35],[1245,60,34,50,-35],[1305,15,40,44,-35],
  [1190,205,30,30,-35],[1220,170,22,22,-35],[1250,200,22,22,-35],[1160,250,20,20,-35],[1225,235,30,26,-35],[1300,150,36,40,-35],
  [1080,315,40,44,-40],[1125,350,50,40,40],[1135,290,40,30,40],[1140,380,34,40,35],[1175,395,26,44,10],[1210,390,28,50,-10],[1245,360,28,56,-20],[1275,325,28,56,-30],[1305,280,30,44,-35],[1185,320,18,36,15],
  [975,370,44,110,-20],[985,550,50,130,15],
  [1095,525,30,36,0],[1135,525,34,36,8],[1170,525,26,36,8],[1210,550,34,60,5],[1255,545,28,52,5],[1290,545,40,36,10],[1330,545,24,34,5],[1068,585,26,26,0],[1118,575,36,28,5],[1155,578,20,20,5],[1220,602,30,26,20],[1260,610,40,30,20],[1310,610,60,50,30],
  [1070,625,24,44,3],[1102,630,26,48,3],[1132,635,26,44,5],[1165,640,30,36,5],[1200,645,28,40,8],[1235,655,28,30,10],[1280,640,50,40,30],[1325,640,34,50,35],[1320,705,26,30,-40],
  [1040,760,24,34,-20],[1075,758,28,34,0],[1110,755,28,34,3],[1145,755,28,34,5],[1185,760,28,30,8],[1225,765,26,30,15],
];
const blocks = (t: B[]) => svg`
  <g fill="#d0cfce">${t.map(([x, y, w, h, r]) => svg`<rect x=${x - w / 2 + 5} y=${y - h / 2 + 7} width=${w} height=${h} transform="rotate(${r} ${x} ${y})"/>`)}</g>
  <g fill="#a59b92">${t.map(([x, y, w, h, r]) => svg`<rect x=${x - w / 2} y=${y - h / 2} width=${w} height=${h} transform="rotate(${r} ${x} ${y})"/>`)}</g>`;

interface Road { t: string; d: string; w: number; c?: string; lane?: boolean; }
const A = "translate(1240 50) scale(.33333)";
const Bt = "translate(1240 440) scale(.33333)";
const C = "translate(1240 800) scale(.33333)";
const S = "translate(0 810) scale(.51852 .33333)";
const ROADS: Road[] = [
  { t: A, d: "M940 380L1160 200", w: 9 },
  { t: A, d: "M1160 200L1350 412", w: 9, c: "#fdf4e6" },
  { t: A, d: "M1030 200L1050 275", w: 5 },
  { t: A, d: "M940 318L985 345M970 305L1030 262", w: 4, lane: false },
  { t: A, d: "M1240 268L1330 200", w: 7 },
  { t: A, d: "M940 788L1090 652L1350 428", w: 9 },
  { t: A, d: "M940 492L1090 655L1150 790L1215 950L1350 1110", w: 8 },
  { t: A, d: "M1155 778L1275 668Q1290 650 1275 630L1205 555", w: 7, lane: false },
  { t: A, d: "M1240 525L1350 635M1300 600L1350 545", w: 7, lane: false },
  { t: A, d: "M1010 1140L1215 955L1350 830", w: 9 },
  { t: Bt, d: "M940 820L1350 455", w: 9 },
  { t: Bt, d: "M960 1240L1350 905", w: 13 },
  { t: C, d: "M940 60L970 190L1045 360Q1055 375 1048 400L985 790", w: 8, c: "#ece9de" },
  { t: C, d: "M1055 385Q1110 455 1200 460Q1245 462 1270 435L1350 345", w: 8 },
  { t: C, d: "M1055 435Q1130 478 1200 485Q1260 490 1290 455L1350 390M1270 465L1350 502", w: 7 },
  { t: C, d: "M1060 368L1125 310L1150 285L1205 268", w: 5, lane: false, c: "#dddad6" },
  { t: C, d: "M940 695L1060 695Q1200 690 1330 780", w: 10 },
  { t: C, d: "M1290 730L1350 660", w: 8, lane: false },
  { t: S, d: "M795 750L860 500L920 290L950 240", w: 8 },
  { t: S, d: "M915 760L960 480Q980 340 1055 240M940 760L985 480Q1005 350 1075 240", w: 7 },
  { t: S, d: "M820 670L950 715L1050 750", w: 10 },
  { t: S, d: "M788 415L850 440", w: 9, lane: false },
  { t: S, d: "M870 440Q830 420 850 385Q880 340 905 400M825 605Q800 590 825 500Q840 480 860 500", w: 7, lane: false },
  { t: S, d: "M872 560L912 562Q920 566 915 590L903 645L868 638Z", w: 7, lane: false },
  { t: S, d: "M870 245L915 295M930 270L965 305L1000 245", w: 7, lane: false },
  { t: S, d: "M1470 245L1492 268L1520 245", w: 8, lane: false },
];
const FOOTPATHS: [string, string][] = [
  [Bt, "M1060 150L1100 108Q1125 95 1150 115L1345 320"],
  [Bt, "M1055 150L1010 190Q960 195 955 215L955 465Q960 520 990 580Q1020 650 1030 715"],
  [Bt, "M951 468Q1060 510 1120 520Q1180 520 1240 470Q1275 450 1310 465"],
  [Bt, "M1003 -60V30L1010 65M995 90L1055 148M970 0L1000 30"],
  [C, "M1230 445L1240 500M1260 490L1310 440L1330 470M955 650L985 640L975 670"],
  [S, "M860 245L905 305M885 370L1000 435L990 520"],
  [S, "M1145 250Q1180 340 1180 450M1178 250L1260 390L1320 490L1350 560L1395 630L1360 700"],
  [S, "M1475 270L1330 480L1290 550L1318 605L1350 560M1500 275L1330 520L1320 600L1310 670"],
  [S, "M1240 280L1210 300M1260 390L1205 460M1470 280L1478 460L1540 490L1555 560V740"],
  [S, "M1500 270L1570 360M1475 370Q1510 470 1545 490M1320 490V600M1260 590L1235 610"],
  [S, "M1320 660Q1250 700 1240 740M1320 660L1370 700V740M1280 690L1300 740M1300 740Q1290 680 1320 675Q1350 690 1340 740M1180 720L1150 740M1180 450V430M1530 640L1560 700"],
];

@customElement("map-canvas")
class MapCanvas extends LitElement {
  static styles = css`
    :host { display: block; overflow: hidden; }
    svg { display: block; width: 100%; height: 100%; }
    path { vector-effect: non-scaling-stroke; fill: none; }
    .edge { stroke: #fbd22e; stroke-dasharray: 7 2; }
    .foot { stroke: #fbd22e; stroke-width: 1.5; stroke-dasharray: 7 2; }
    .solid path { fill: #a59b92; }
    .shade path { fill: #cfd0d0; }
    text { font: italic 14.5px "Noto Sans", "Open Sans", sans-serif; letter-spacing: -0.2px; fill: #2c2c2c; stroke: #fff; stroke-width: 3.5px; stroke-linejoin: round; paint-order: stroke; }
    .tight { letter-spacing: -0.35px; }
  `;
  render() {
    const lanes = ROADS.filter((r) => r.lane !== false);
    const city = [
      "M1115 275L1170 370L1150 390L1110 335L1065 450L1090 475L1080 505L1050 485L1025 620L1125 670L1115 700L995 655L1030 440Z",
      "M1230 460L1290 550L1260 585L1205 500ZM1185 460L1205 500L1150 570L1125 535Z",
      "M1145 572L1205 665L1175 695L1120 605ZM1235 610L1262 655L1238 690L1210 645Z",
      "M1455 435L1560 580L1480 720L1450 680L1510 610L1455 510L1400 590L1372 545Z",
      "M1410 620L1435 655L1412 695L1385 655ZM1222 698L1255 745H1195ZM1425 710L1450 745H1395Z",
      "M1280 245H1435L1430 265L1405 290L1400 310L1385 340L1355 305L1330 335Z",
      "M1515 370L1560 450V540L1495 400ZM1540 250H1560V320L1535 270Z",
      "M850 275L875 300L870 350L830 400L800 385L788 340V305L830 275ZM788 440L825 450L798 650H788Z",
    ];
    return html`<svg viewBox="408 119 1278 940" preserveAspectRatio="none">
      <rect x="408" y="119" width="1278" height="940" fill="#bbb2aa" />
      <g transform=${A}>${blocks(TILE_A)}</g>
      <g transform=${Bt}>${blocks(TILE_B)}</g>
      <g transform=${C}>${blocks(TILE_C)}</g>
      <g class="shade" transform="translate(3 4)"><g transform=${S}>${city.map((d) => svg`<path d=${d} />`)}</g></g>
      <g class="solid" transform=${S}>${city.map((d) => svg`<path d=${d} />`)}</g>
      <polygon points="1557,402 1686,538 1686,588 1583,679 1557,655" fill="#73b587" stroke="#45996a" />
      <polygon points="1565,450 1577,463 1571,469 1557,458 1557,448" fill="#a59b92" />
      ${lanes.map((r) => svg`<path class="edge" transform=${r.t} d=${r.d} stroke-width=${r.w + 9} />`)}
      ${lanes.map((r) => svg`<path transform=${r.t} d=${r.d} stroke="#bbb2aa" stroke-width=${r.w + 6} />`)}
      ${FOOTPATHS.map(([t, d]) => svg`<path class="foot" transform=${t} d=${d} />`)}
      ${ROADS.map((r) => svg`<path transform=${r.t} d=${r.d} stroke=${r.c ?? "#efeeed"} stroke-width=${r.w} />`)}
      <path id="central" d="M1620 322Q1632 354 1648 372Q1662 388 1700 430" />
      <path id="fontaine" d="M1588 1033Q1640 1036 1700 1074" />
      <path id="clay" d="M1597 679L1672 613" />
      <path id="ashland" d="M1575 856L1694 745" />
      <path id="vets" d="M434 1010Q454 955 475 920" />
      <path id="univ" d="M510 933Q526 905 570 870" />
      <text><textPath href="#central">Central Avenue</textPath></text>
      <text class="tight"><textPath href="#fontaine">Fontaine Road</textPath></text>
      <text><textPath href="#clay">Clay Avenue</textPath></text>
      <text><textPath href="#ashland">South Ashland Avenue</textPath></text>
      <text><textPath href="#vets">Veterans Drive</textPath></text>
      <text><textPath href="#univ">University</textPath></text>
    </svg>`;
  }
}

/* ---------- layer properties window ---------- */
const PAGES: [string, string][] = [
  ["tools", "General"], ["style", "Style"], ["taglab", "Labels"], ["fields", "Fields"], ["brush", "Rendering"], ["bubble", "Display"],
  ["gears", "Actions"], ["joins", "Joins"], ["diagrams", "Diagrams"], ["info", "Metadata"], ["eps", "Variables"], ["legend", "Legend"],
];

@customElement("layer-properties")
class LayerProperties extends LitElement {
  static styles = [base, css`
    :host { display: block; background: #f2f1f0; border-radius: 7px 7px 0 0; box-shadow: 0 3px 10px rgba(0,0,0,.28), 0 6px 30px 8px rgba(0,0,0,.12); }
    .title { background: linear-gradient(#434139, #413f38); color: #8c8883; padding-left: 7px; gap: 3px; }
    .title span:last-child { margin-left: 9px; }
    .wbtn { background: #5f5c57; }
    .cols { display: flex; height: 770px; }
    nav { width: 150px; background: #5c5c5c; color: #fff; }
    .item { display: flex; align-items: center; height: 36px; padding-left: 5px; gap: 8px; }
    .item.sel { background: #f2f1f0; color: #222; padding-left: 8px; }
    .split { width: 15px; display: flex; align-items: center; padding: 3px 0 0 1px; }
    .page { flex: 1; }
    .mode { justify-content: flex-start; margin: 4px 0 7px 1px; padding: 0 0 2px 5px; gap: 4px; }
    .table { height: 665px; border: 1px solid #b8b6b2; border-right: 0; background: #fff; }
    .tr { display: grid; grid-template-columns: 151px 100px 100px 100px 1fr; }
    .th { height: 25px; background: linear-gradient(#fff, #f3f2f1); border-bottom: 1px solid #b8b6b2; }
    .th span { padding: 2px 4px; border-right: 1px solid #d4d2cf; }
    .td { height: 22px; background: linear-gradient(#ebeae9, #dcdad8); color: #333; line-height: 17px; }
    .td span { padding: 0 4px; }
    .td .first { display: flex; align-items: flex-start; gap: 8px; padding-left: 26px; }
    .td .cb { margin-top: 4px; padding: 0; }
    .num { text-align: right; }
    .tools { display: flex; gap: 8px; margin: 7px 0 0 1px; }
    .tools .btn { width: 36px; }
    .foot { display: flex; gap: 8px; margin: 8px 0 0 -8px; }
    .foot .btn { width: 83px; padding-bottom: 2px; }
    .foot .menu { justify-content: space-between; padding: 0 7px 2px 14px; }
  `];
  render() {
    return html`
      <div class="title">
        <span class="wbtn"><svg width="8" height="8"><path d="M1 1l6 6M7 1L1 7" stroke="#34322d" stroke-width="1.300" /></svg></span>
        <span class="wbtn"><svg width="8" height="8"><rect x="1" y="1" width="6" height="6" fill="none" stroke="#34322d" stroke-width="1.300" /></svg></span>
        <span>Layer Properties - highway | Labels</span>
      </div>
      <div class="cols">
        <nav>${PAGES.map(([i, l]) => html`<div class=${classMap({ item: true, sel: l === "Labels" })}>${icon(i)}<span>${l}</span></div>`)}</nav>
        <div class="split"><span class="vgrip"><i></i><i></i><i></i></span></div>
        <div class="page">
          <div class="btn mode">${icon("rules", 16)}<span>Rule-based labeling</span></div>
          <div class="table">
            <div class="tr th"><span>Label</span><span>Rule</span><span>Min. scale</span><span>Max. scale</span><span>Text</span></div>
            <div class="tr td"><span class="first">${check()}Basic roads</span><span>(no filter)</span><span class="num">1:15,000</span><span class="num">1:1</span><span>name</span></div>
          </div>
          <div class="tools"><span class="btn">${icon("add", 16)}</span><span class="btn">${icon("edit", 16)}</span><span class="btn">${icon("rem", 16)}</span></div>
          <div class="foot"><span class="btn">Help</span><span class="btn menu">Style ${tri(8, 6)}</span></div>
        </div>
      </div>`;
  }
}

/* ---------- edit rule window ---------- */
const TABS: [string, string][] = [
  ["lt", "Text"], ["lf", "Formatting"], ["lb", "Buffer"], ["lbg", "Background"], ["lsh", "Shadow"], ["lpl", "Placement"], ["lre", "Rendering"],
];
const combo = (t: unknown) => html`<span class="field combo"><span class="val">${t}</span><span class="drop">${tri(8, 6, "#777573")}</span></span>`;
const dd = (dim = false) => html`<span class=${dim ? "dd dim" : "dd"}>${icon("dd", 23, 17)}</span>`;

@customElement("edit-rule")
class EditRule extends LitElement {
  static styles = [base, css`
    :host { display: block; background: #f2f1f0; border-radius: 7px 7px 0 0; box-shadow: 0 4px 14px rgba(0,0,0,.42), 0 6px 36px 8px rgba(0,0,0,.24); }
    .title { background: linear-gradient(#56534a, #3f3e39); border-top: 1px solid #35342f; color: #dfdbd2; padding: 0 0 2px 7px; gap: 3px; }
    .title span:last-child { margin-left: 10px; }
    .close { background: #ef5c2e; border: 1px solid #a8401c; }
    .max { background: #6b6862; border: 1px solid #3b3935; }
    .row { display: grid; align-items: center; height: 25px; }
    .row > span:not([class]) { padding-bottom: 2px; }
    .line { display: flex; align-items: center; height: 20px; padding-bottom: 2px; }
    .desc { margin-top: 12px; padding-left: 11px; grid-template-columns: 86px 641px; }
    .filter { margin-top: 8px; padding-left: 11px; grid-template-columns: 86px 459px 91px 91px; }
    .filter .btn { margin-left: 8px; padding-bottom: 2px; }
    .group { padding-left: 14px; gap: 6px; font-weight: 700; margin-top: 8px; }
    .group.second { margin-top: 18px; }
    .minmax { margin-top: 3px; padding-left: 28px; height: 20px; grid-template-columns: 354px auto; }
    .scales { margin-top: 5px; padding-left: 28px; grid-template-columns: 31px 292px 31px 31px 292px 24px; }
    .sq { width: 20px; height: 22px; margin-left: 4px; }
    .with { margin-top: 6px; padding-left: 28px; grid-template-columns: 78px 595px 28px; }
    .with .sq { margin-left: 8px; height: 25px; }
    .combo { padding: 0; }
    .val { flex: 1; padding: 0 0 2px 6px; display: flex; align-items: center; gap: 5px; }
    .abc { font-weight: 700; font-size: 9.5px; letter-spacing: -0.2px; margin-left: -2px; }
    .drop { width: 25px; height: 25px; display: flex; align-items: center; justify-content: center; border-left: 1px solid #b4b2af; background: linear-gradient(#fff, #ececea); padding: 3px 0 0 1px; }
    .samplehead { margin-top: 7px; padding-left: 31px; gap: 8px; }
    .sample { margin-top: 2px; height: 88px; padding-left: 36px; grid-template-columns: 681px 13px; align-items: stretch; }
    .preview { background: #fff; border: 1px solid #bdbbb7; padding: 9px 7px; font-style: italic; font-size: 14.3px; letter-spacing: -0.4px; color: #222; }
    .sb { display: flex; flex-direction: column; border: 1px solid #b8b6b3; border-radius: 7px; background: #dddcdb; overflow: hidden; width: 13px; }
    .sb .cap { height: 13px; flex: none; background: #f4f3f2; display: flex; align-items: center; justify-content: center; }
    .sb .cap .up { opacity: .6; }
    .sb .thumb { flex: none; background: linear-gradient(90deg, #fff, #f2f1f0); border: solid #8e8c89; border-width: 1px 0; border-radius: 6px; display: flex; align-items: center; justify-content: center; }
    .sb .vgrip i { background: #aaa8a5; width: 4px; }
    .sb .rest { flex: 1; }
    .short .thumb { height: 34px; }
    .edit { margin-top: 1px; height: 26px; padding-left: 37px; grid-template-columns: 358px 22px 214px 78px 20px; }
    .edit .undo { width: 20px; height: 20px; margin-left: 2px; }
    .edit .dropb { width: 18px; height: 26px; margin-left: 2px; padding-top: 3px; }
    .edit .swatch { height: 26px; background: #fff; box-shadow: inset 0 0 0 2px #f4f3f2; }
    .slider { display: flex; align-items: center; padding-left: 9px; }
    .fill { width: 10px; height: 4px; background: #f58a66; border-radius: 2px; }
    .groove { width: 174px; height: 3px; background: #e5dddb; border-top: 1px solid #cbc7c4; }
    .grip { height: 10px; display: flex; align-items: center; padding-left: 376px; padding-top: 3px; }
    .main { height: 582px; padding-left: 31px; grid-template-columns: 169px 12px 505px 13px; align-items: stretch; }
    .list { background: #fff; border: 1px solid #bdbbb7; color: #3c3c3c; }
    .tab { display: flex; align-items: center; height: 22px; padding-left: 4px; gap: 7px; }
    .tab.sel { background: #ff7146; color: #fff; outline: 1px dotted #a77a66; outline-offset: -1px; }
    .mid { display: flex; align-items: center; padding-left: 1px; }
    .gap5 { margin-top: 5px; }
    .radios { margin-top: 44px; padding-left: 3px; }
    .radio { width: 14px; height: 14px; border: 1px solid #8e8b88; border-radius: 50%; background: #fff; margin-right: 9px; flex: none; }
    .radio.on { background: radial-gradient(#8a4028 0 3px, #f4744c 3.5px); border-color: #c85a38; }
    .radios .txt { width: 66px; }
    .radios .txt.two { width: 62px; }
    .allowed { display: grid; grid-template-columns: 132px 22px 87px 22px 64px 22px auto; margin-top: 47px; }
    .orient { margin-top: 8px; padding-left: 132px; gap: 7px; }
    .dimmed, .orient { color: #aaa8a6; }
    .r1 { grid-template-columns: 67px 394px auto; margin-top: 8px; }
    .r2 { grid-template-columns: 57px 404px auto; margin-top: 8px; }
    .r1.unit, .r2.unit { margin-top: 14px; }
    .unit .btn { grid-column: 2; justify-content: space-between; padding: 0 3px 2px 4px; }
    .dimmed .btn, .dimmed .field { border-color: #cfcdcb; color: #aaa8a6; }
    .dimmed .btn { background: linear-gradient(#f8f8f7, #efeeed); }
    .dimmed .field { background: #efe6e6; }
    .num { padding: 0 0 0 5px; justify-content: space-between; }
    .num .fig { padding-bottom: 2px; }
    .spin { width: 15px; height: 25px; display: flex; flex-direction: column; align-items: center; justify-content: center; gap: 8px; border-left: 1px solid #c2c0bd; background: linear-gradient(#fff, #ececea); }
    .unit .spin { border: 0; background: none; gap: 5px; width: 12px; margin-top: 5px; }
    .up, .dn { width: 0; height: 0; border: 3px solid transparent; }
    .up { border-bottom-color: #6e6c6a; border-top: 0; }
    .dn { border-top-color: #6e6c6a; border-bottom: 0; }
    .dimmed .up { border-bottom-color: #aaa8a6; }
    .dimmed .dn { border-top-color: #aaa8a6; }
    .dd { margin-left: 11px; display: block; }
    .dd.dim { opacity: .55; }
    .angle { margin-top: 6px; }
    .inout { margin-top: 11px; padding-left: 14px; grid-template-columns: 49px 165px 8px 60px 165px auto; }
    .hr { margin-top: 16px; height: 1px; width: 499px; background: #c9c7c4; }
    .sect { padding-left: 3px; gap: 8px; margin-top: 16px; }
    .coord { margin-top: 8px; padding-left: 16px; display: grid; grid-template-columns: 84px 10px 44px 8px auto; }
    .align { margin-top: 12px; padding-left: 16px; display: grid; grid-template-columns: 84px 69px 44px 50px auto; color: #aaa8a6; }
    .align .name { color: #4c4c4c; }
    .rot { margin-top: 12px; padding-left: 16px; }
    .rot .name { width: 76px; }
    .rot .cb { margin: 2px 8px 0 25px; }
    .rot .pre { margin-top: 2px; }
    .prio { margin-top: 20px; }
    .tall { margin-top: 29px; height: 547px; }
    .tall .thumb { height: 478px; }
    .foot { display: flex; justify-content: flex-end; margin-top: 18px; padding-right: 12px; }
    .ok { width: 83px; background: linear-gradient(#ffab8e, #fd8f6b); border-color: #b98672; color: #6a4638; padding-bottom: 1px; }
  `];
  private bar(cls: string) {
    return html`<span class="sb ${cls}"><span class="cap"><i class="up"></i></span><span class="thumb"><span class="vgrip"><i></i><i></i><i></i></span></span><span class="rest"></span><span class="cap"><i class="dn"></i></span></span>`;
  }
  render() {
    const down = html`<svg class="ic" width="11" height="7" viewBox="0 0 11 7"><path d="M0 0h11L5.500 7z" fill="#3a3a3a" /></svg>`;
    const num = (v: string) => html`<span class="field num"><span class="fig">${v}</span>${spin}</span>`;
    return html`
      <div class="title">
        <span class="wbtn close"><svg width="8" height="8"><path d="M1.500 1.500l5 5M6.500 1.500l-5 5" stroke="#4a1c0c" stroke-width="1.300" /></svg></span>
        <span class="wbtn max"><svg width="8" height="8"><rect x="1" y="1" width="6" height="6" fill="none" stroke="#34322d" stroke-width="1.200" /></svg></span>
        <span>Edit rule</span>
      </div>
      <div class="row desc"><span>Description</span><span class="field">Basic roads</span></div>
      <div class="row filter"><span>Filter</span><span class="field"></span><span class="btn">...</span><span class="btn">Test</span></div>
      <div class="line group">${check()}Scale range</div>
      <div class="row minmax"><span>Minimum (exclusive)</span><span>Maximum (inclusive)</span></div>
      <div class="row scales">
        ${icon("zout", 23, 23, "0 0 24 24")}${combo("1:15,000")}<span class="btn sq">${icon("pick", 16)}</span>
        ${icon("zin", 23, 23, "0 0 24 24")}${combo("1:1")}<span class="btn sq">${icon("pick", 16)}</span>
      </div>
      <div class="line group second">${check()}Labels</div>
      <div class="row with"><span>Label with</span>${combo(html`<span class="abc">abc</span>name`)}<span class="btn sq">${icon("eps", 13, 14, "0 0 24 24")}</span></div>
      <div class="line samplehead">${down}Text/Buffer sample</div>
      <div class="row sample"><div class="preview">Lorem Ipsum</div>${this.bar("short")}</div>
      <div class="row edit">
        <span class="field">Lorem Ipsum</span><span class="btn undo">${icon("undo", 14, 14)}</span>
        <span class="slider"><span class="fill"></span>
          <svg class="ic" width="12" height="20" viewBox="0 0 12 20"><path d="M1 4q0-3 3-3h4q3 0 3 3v9l-5 6-5-6z" fill="#fbfaf9" stroke="#b4b2af" /><path d="M4 7.500h4M4 10h4M4 12.500h4" stroke="#b4b2af" /></svg>
          <span class="groove"></span></span>
        <span class="btn swatch"></span><span class="btn dropb">${tri(8, 6, "#777573")}</span>
      </div>
      <div class="grip"><span class="hgrip"><i></i><i></i><i></i></span></div>
      <div class="row main">
        <div class="list">${TABS.map(([i, l]) => html`<div class=${classMap({ tab: true, sel: l === "Placement" })}>${icon(i, 18, 18)}<span>${l}</span></div>`)}</div>
        <div class="mid"><span class="vgrip"><i></i><i></i><i></i></span></div>
        <div class="panel">
          <div class="line gap5">Placement</div>
          <div class="line radios"><span class="radio"></span><span class="txt">Parallel</span><span class="radio on"></span><span class="txt two">Curved</span><span class="radio"></span><span>Horizontal</span></div>
          <div class="line allowed"><span>Allowed positions</span>${check("off")}<span>Above line</span>${check("dim")}<span class="dimmed">On line</span>${check("off")}<span>Below line</span></div>
          <div class="line orient">${check("gone")}Line orientation dependent position</div>
          <div class="row r1 dimmed"><span>Distance</span>${num("0.0000")}${dd(true)}</div>
          <div class="row r1 unit dimmed"><span class="btn">Millimeter${spin}</span>${dd(true)}</div>
          <div class="row r2"><span>Repeat</span>${num("No repeat")}${dd()}</div>
          <div class="row r2 unit"><span class="btn">Millimeter${spin}</span>${dd()}</div>
          <div class="line angle">Maximum angle between curved characters</div>
          <div class="row inout"><span>inside</span>${num("25.0")}<span></span><span>outside</span>${num("25.0")}${dd()}</div>
          <div class="hr"></div>
          <div class="line sect">${down}Data defined</div>
          <div class="line coord"><span>Coordinate</span><span>X</span>${dd()}<span>Y</span>${dd()}</div>
          <div class="line align"><span class="name">Alignment</span><span>horizontal</span>${dd(true)}<span>vertical</span>${dd(true)}</div>
          <div class="line rot"><span class="name">Rotation</span>${dd()}${check()}<span class="pre">Preserve data rotation values</span></div>
          <div class="line sect prio">${down}Priority</div>
        </div>
        ${this.bar("tall")}
      </div>
      <div class="foot"><span class="btn ok"><u>O</u>K</span></div>`;
  }
}

/* ---------- main window ---------- */
const ROW1 = "| new open save saveas composer composers | hand! pansel zin zout z11 zfull zsel zlay zlast znext bmnew bm refresh | identify run v select v seleps v desel table abacus sigma ruler v tips! textann v | help".split(" ");
const ROW2 = "| pencils pencil gsave gvee gcurve v gmove gnode trash cut copy paste | tagY pie pinned gpin geye gtmove gtrot gtedit | db | cubeD csw - python cubeG - sheet - redbox -".split(" ");
const SIDE: [string, boolean][] = [
  ["lvee", false], ["lraster", false], ["feather", false], ["pg", true], ["wms", true], ["wcs", false], ["wfs", true], ["comma", false], ["vlay", false], ["gpkg", true],
];
const bar = (names: string[]) => names.map((n) => {
  if (n === "|") return html`<span class="handle"><span class="vgrip"><i></i><i></i><i></i></span></span>`;
  if (n === "-") return html`<span class="handle dash"></span>`;
  if (n === "v") return html`<span class="more">${tri(8, 6)}</span>`;
  if (n === "pencils") return html`<span class="wide">${icon(n, 42, 24)}</span>`;
  const on = n.endsWith("!");
  return html`<span class=${classMap({ cell: true, on })}>${icon(on ? n.slice(0, -1) : n)}</span>`;
});

@customElement("app-root")
class AppRoot extends LitElement {
  static styles = [base, css`
    :host { display: block; position: relative; width: 1686px; height: 1085px; overflow: hidden; background: #f2f1f0; }
    .desk { display: flex; flex-direction: column; height: 1085px; }
    .bar { display: flex; align-items: center; height: 40px; }
    .bar.top { height: 38px; }
    .bar.two { padding-top: 2px; }
    .handle { width: 13px; display: flex; justify-content: center; }
    .handle:first-child { width: 11px; }
    .handle .vgrip i, .side .hgrip i { background: #cfcdca; }
    .more { width: 20px; display: flex; justify-content: center; padding-top: 3px; }
    .cell { width: 36px; height: 34px; display: flex; align-items: center; justify-content: center; }
    .cell.on { width: 34px; margin: 0 1px; background: linear-gradient(#dddbda, #e8e6e5); border: 1px solid #a9a6a3; border-radius: 4px; }
    .work { display: flex; height: 941px; }
    .side { width: 60px; display: flex; flex-direction: column; padding: 5px 0 0 8px; }
    .side .hgrip { padding-left: 18px; height: 4px; margin-bottom: 3px; }
    .slot { display: flex; align-items: center; justify-content: space-between; height: 36px; padding-right: 8px; }
    .sum { padding: 9px 0 0 10px; }
    .side .hgrip.low { margin: 7px 0 0; }
    .dock { width: 340px; display: flex; flex-direction: column; padding: 3px 0 0 1px; }
    .dtools { display: flex; gap: 12px; height: 35px; padding: 12px 0 0 7px; }
    .tree { height: 853px; background: #fff; border: 1px solid #b8b6b2; border-bottom: 2px solid #aeaca8; }
    .tr { display: flex; align-items: center; height: 22px; padding-left: 8px; gap: 9px; }
    .tr.sel { background: #dedcda; margin-top: 44px; }
    .tr.sub { padding-left: 28px; }
    .tr.leaf { padding-left: 25px; }
    .tr.gap { margin-top: 198px; }
    .tabs { display: flex; }
    .tabs span { height: 29px; padding: 4px 7px; border: 1px solid #b4b2af; border-top: 0; border-radius: 0 0 4px 4px; background: #f8f8f7; width: 102px; letter-spacing: -0.2px; }
    .tabs .off { height: 26px; width: 116px; background: #e2e0df; border-color: #c9c7c4; padding-top: 3px; }
    .canvas { width: 1279px; margin-left: 7px; border-top: 1px solid #b4b2af; flex: none; }
    .status { display: flex; align-items: center; height: 26px; border-top: 1px solid #d0cecb; padding-left: 643px; }
    .status .coord { width: 300px; margin: 7px 0 0 6px; padding-left: 24px; }
    .status .lab { padding-top: 6px; }
    .crs { display: flex; align-items: center; gap: 2px; margin-left: 527px; padding-top: 6px; }
    .crs .msgs { margin-left: 18px; }
    layer-properties { position: absolute; left: 103px; top: 94px; width: 800px; height: 798px; }
    edit-rule { position: absolute; left: 807px; top: 58px; width: 750px; height: 1040px; }
  `];
  render() {
    const open = tri(8, 7, "#55534f");
    return html`
      <div class="desk">
        <div class="bar top">${bar(ROW1)}</div>
        <div class="bar two">${bar(ROW2)}</div>
        <div class="bar two">${bar(["|", "osm"])}</div>
        <div class="work">
          <div class="side">
            <span class="hgrip"><i></i><i></i><i></i></span>
            ${SIDE.map(([n, m]) => html`<span class="slot">${icon(n)}${m ? tri(8, 6) : nothing}</span>`)}
            <span class="hgrip low"><i></i><i></i><i></i></span>
            <span class="sum">${icon("sumcalc")}</span>
          </div>
          <div class="dock">
            <div>Layers</div>
            <div class="dtools">${icon("style", 15, 15, "0 0 24 24")}${icon("layers", 15, 15)}</div>
            <div class="tree">
              <div class="tr">${open}${check()}</div>
              <div class="tr sel">${open}${check()}</div>
              <div class="tr sub">${open}</div>
              <div class="tr leaf gap">${check()}</div>
              <div class="tr leaf">${check()}</div>
              <div class="tr leaf">${check()}</div>
              <div class="tr leaf">${check()}</div>
            </div>
            <div class="tabs"><span>Layers Panel</span><span class="off">Browser Panel</span></div>
          </div>
          <map-canvas class="canvas"></map-canvas>
        </div>
        <div class="status">
          <span class="lab">Coordinate</span><span class="field coord">5279757</span>
          <span class="crs">${icon("srs", 16)}<span>EPSG:3089</span><span class="msgs">${icon("msg", 16)}</span></span>
        </div>
      </div>
      <layer-properties></layer-properties>
      <edit-rule></edit-rule>`;
  }
}
